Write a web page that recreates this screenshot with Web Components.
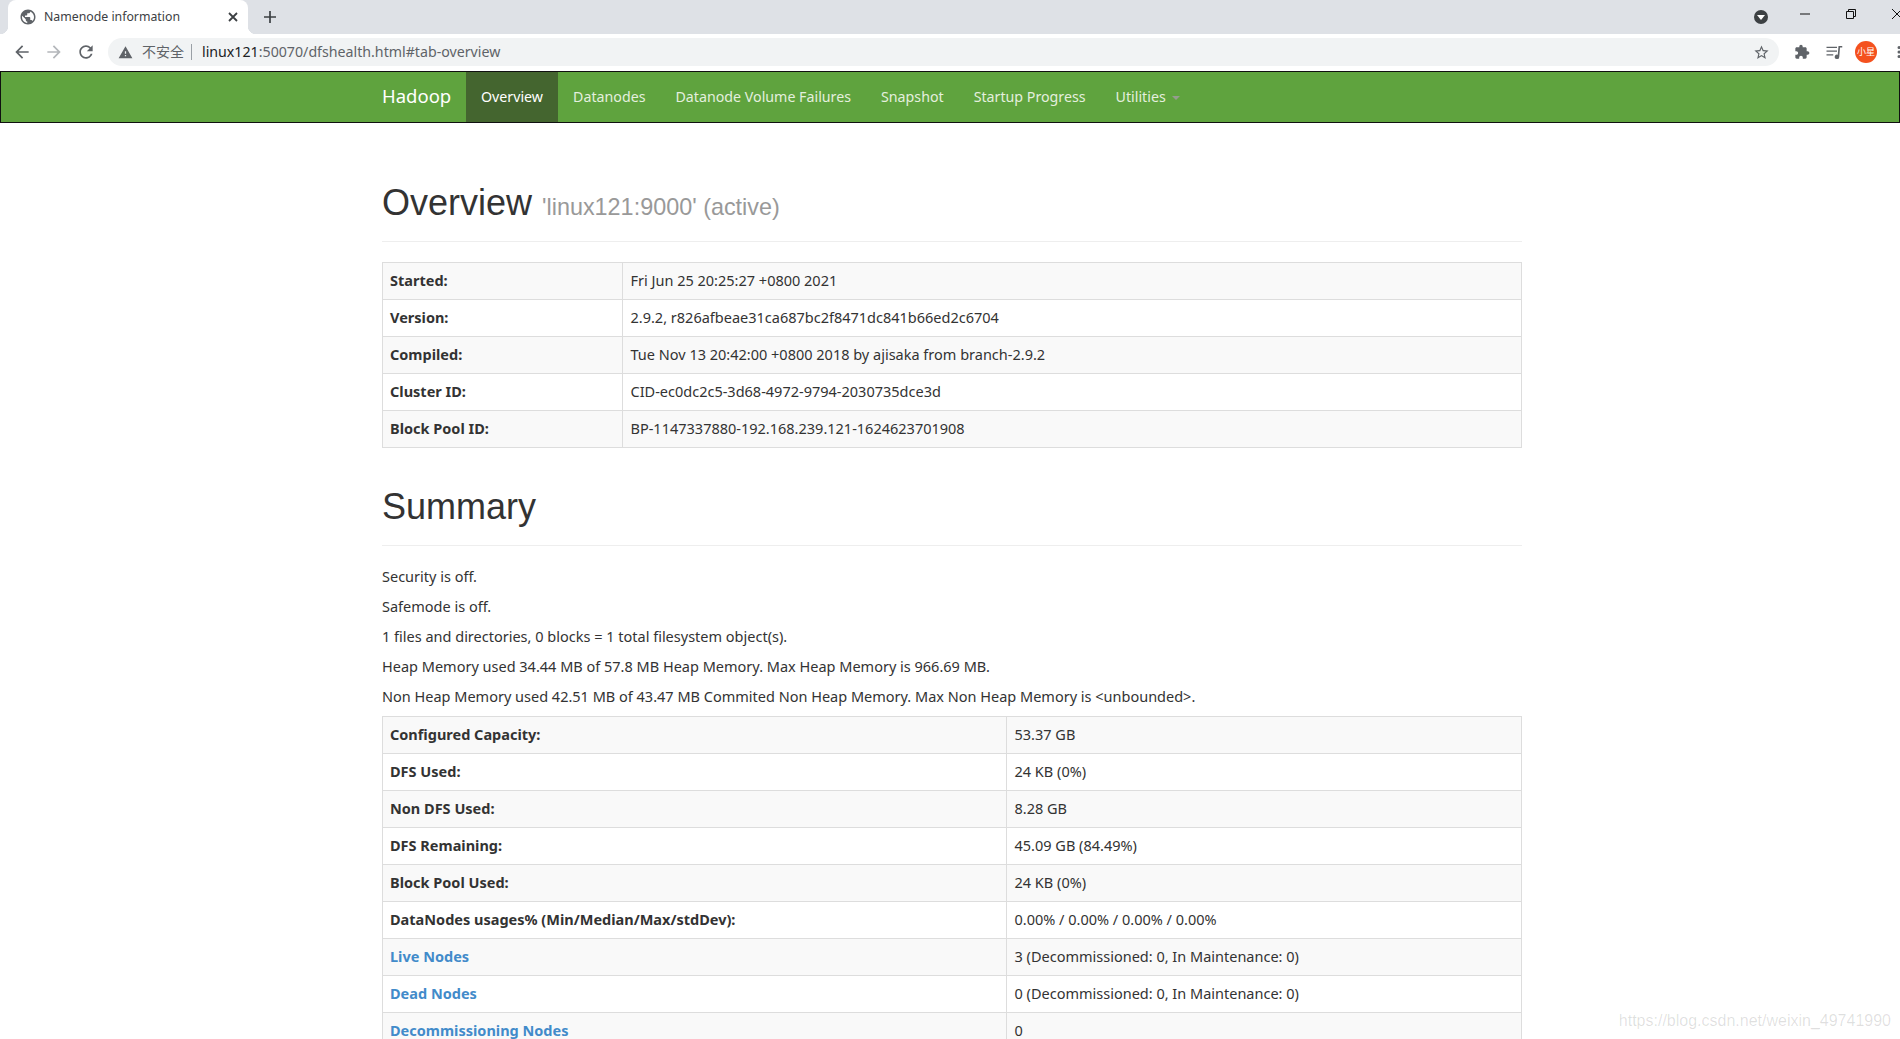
<!DOCTYPE html>
<html lang="en">
<head>
<meta charset="utf-8">
<title>Namenode information</title>
<style>
  html, body { margin: 0; height: 100%; overflow: hidden; background: #fff; }
  body { font: 14.5px/20px "Noto Sans", "Noto Sans CJK SC", sans-serif; color: #333; }
</style>
</head>
<body>
  <browser-frame tab-title="Namenode information" url="linux121:50070/dfshealth.html#tab-overview"></browser-frame>
  <hadoop-navbar brand="Hadoop">
    <nav-item active>Overview</nav-item>
    <nav-item>Datanodes</nav-item>
    <nav-item>Datanode Volume Failures</nav-item>
    <nav-item>Snapshot</nav-item>
    <nav-item>Startup Progress</nav-item>
    <nav-item caret>Utilities</nav-item>
  </hadoop-navbar>
  <page-body>
    <page-header first>Overview <small slot="small">'linux121:9000' (active)</small></page-header>
    <info-table label-width="240">
      <info-row label="Started:">Fri Jun 25 20:25:27 +0800 2021</info-row>
      <info-row label="Version:">2.9.2, r826afbeae31ca687bc2f8471dc841b66ed2c6704</info-row>
      <info-row label="Compiled:">Tue Nov 13 20:42:00 +0800 2018 by ajisaka from branch-2.9.2</info-row>
      <info-row label="Cluster ID:">CID-ec0dc2c5-3d68-4972-9794-2030735dce3d</info-row>
      <info-row label="Block Pool ID:">BP-1147337880-192.168.239.121-1624623701908</info-row>
    </info-table>
    <page-header>Summary</page-header>
    <text-line>Security is off.</text-line>
    <text-line>Safemode is off.</text-line>
    <text-line>1 files and directories, 0 blocks = 1 total filesystem object(s).</text-line>
    <text-line>Heap Memory used 34.44 MB of 57.8 MB Heap Memory. Max Heap Memory is 966.69 MB.</text-line>
    <text-line>Non Heap Memory used 42.51 MB of 43.47 MB Commited Non Heap Memory. Max Non Heap Memory is &lt;unbounded&gt;.</text-line>
    <info-table label-width="624">
      <info-row label="Configured Capacity:">53.37 GB</info-row>
      <info-row label="DFS Used:">24 KB (0%)</info-row>
      <info-row label="Non DFS Used:">8.28 GB</info-row>
      <info-row label="DFS Remaining:">45.09 GB (84.49%)</info-row>
      <info-row label="Block Pool Used:">24 KB (0%)</info-row>
      <info-row label="DataNodes usages% (Min/Median/Max/stdDev):">0.00% / 0.00% / 0.00% / 0.00%</info-row>
      <info-row label="Live Nodes" link>3 (Decommissioned: 0, In Maintenance: 0)</info-row>
      <info-row label="Dead Nodes" link>0 (Decommissioned: 0, In Maintenance: 0)</info-row>
      <info-row label="Decommissioning Nodes" link>0</info-row>
    </info-table>
  </page-body>
  <water-mark>https://blog.csdn.net/weixin_49741990</water-mark>

<script>
// material style icon paths, all on a 24 unit box
const ICONS = {
  globe: "M12 2C6.48 2 2 6.48 2 12s4.48 10 10 10 10-4.48 10-10S17.52 2 12 2zm-1 17.93c-3.95-.49-7-3.85-7-7.93 0-.62.08-1.21.21-1.79L9 15v1c0 1.1.9 2 2 2v1.93zm6.9-2.54c-.26-.81-1-1.39-1.9-1.39h-1v-3c0-.55-.45-1-1-1H8v-2h2c.55 0 1-.45 1-1V7h2c1.1 0 2-.9 2-2v-.41c2.93 1.19 5 4.06 5 7.41 0 2.08-.8 3.97-2.1 5.39z",
  back: "M20 11H7.83l5.59-5.59L12 4l-8 8 8 8 1.41-1.41L7.83 13H20v-2z",
  forward: "M4 11h12.17l-5.59-5.59L12 4l8 8-8 8-1.41-1.41L16.17 13H4v-2z",
  reload: "M17.65 6.35C16.2 4.9 14.21 4 12 4c-4.42 0-7.99 3.58-7.99 8s3.57 8 7.99 8c3.73 0 6.84-2.55 7.73-6h-2.08c-.82 2.33-3.04 4-5.65 4-3.31 0-6-2.69-6-6s2.69-6 6-6c1.66 0 3.14.69 4.22 1.78L13 11h7V4l-2.35 2.35z",
  warning: "M1 21h22L12 2 1 21zm12-3h-2v-2h2v2zm0-4h-2v-4h2v4z",
  star: "M22 9.24l-7.19-.62L12 2 9.19 8.63 2 9.24l5.46 4.73L5.82 21 12 17.27 18.18 21l-1.63-7.03L22 9.24zM12 15.4l-3.76 2.27 1-4.28-3.32-2.88 4.38-.38L12 6.1l1.71 4.04 4.38.38-3.32 2.88 1 4.28L12 15.4z",
  puzzle: "M20.5 11H19V7c0-1.1-.9-2-2-2h-4V3.5C13 2.12 11.88 1 10.5 1S8 2.12 8 3.5V5H4c-1.1 0-1.99.9-1.99 2v3.8H3.5c1.49 0 2.7 1.21 2.7 2.7s-1.21 2.7-2.7 2.7H2V20c0 1.1.9 2 2 2h3.8v-1.5c0-1.49 1.21-2.7 2.7-2.7 1.49 0 2.7 1.21 2.7 2.7V22H17c1.1 0 2-.9 2-2v-4h1.5c1.38 0 2.5-1.12 2.5-2.5S21.88 11 20.5 11z",
  media: "M2 5h14v1.800H2zM2 10h14v1.800H2zM2 15h9v1.800H2zM18 4h5v2h-3l-1 12.500a3 3 0 1 1-2-2.900z",
  menu: "M12 8a2 2 0 1 0 0-4 2 2 0 0 0 0 4zm0 2a2 2 0 1 0 0 4 2 2 0 0 0 0-4zm0 6a2 2 0 1 0 0 4 2 2 0 0 0 0-4z",
};

function icon(name, size, fill) {
  return `<svg width="${size}" height="${size}" viewBox="0 0 24 24" fill="${fill}"><path d="${ICONS[name]}"/></svg>`;
}

class BrowserFrame extends HTMLElement {
  constructor() {
    super();
    this.attachShadow({ mode: "open" });
  }

  connectedCallback() {
    const title = this.getAttribute("tab-title");
    const url = this.getAttribute("url");
    const [host, ...rest] = url.split(":");
    this.shadowRoot.innerHTML = `
      <style>
        :host { display: block; width: 1920px; font-family: "Noto Sans", "Noto Sans CJK SC", sans-serif; }
        .strip { height: 34px; background: #dee1e6; display: flex; align-items: flex-end; padding-left: 8px; }
        .tab { position: relative; width: 240px; height: 34px; box-sizing: border-box; background: #fff; border-radius: 8px 8px 0 0;
               display: flex; align-items: center; padding: 0 9px 0 11px; gap: 7px; font-size: 12.3px; color: #3c4043; }
        /* outward curves at the foot of the active tab */
        .tab::before, .tab::after { content: ""; position: absolute; bottom: 0; width: 8px; height: 8px; }
        .tab::before { left: -8px; background: radial-gradient(circle at 0 0, transparent 8px, #fff 8.500px); }
        .tab::after { right: -8px; background: radial-gradient(circle at 100% 0, transparent 8px, #fff 8.500px); }
        .tab .name { flex: 1; }
        .plus { margin: 0 0 0 15px; height: 34px; display: flex; align-items: center; }
        .spacer { flex: 1; }
        .win { height: 34px; display: flex; align-items: center; }
        .drop { width: 14px; height: 14px; background: #3c4043; border-radius: 50%; display: flex; align-items: center; justify-content: center; margin-right: 14px; }
        .drop i { border: 4px solid transparent; border-top: 5px solid #fff; border-bottom: 0; }
        .win svg { display: block; }
        .winbtn { width: 46px; display: flex; justify-content: center; margin-top: -6px; }
        .bar { height: 37px; box-sizing: border-box; background: #fff; display: flex; align-items: center; padding: 0 0 1px 12px; }
        .nav { display: flex; gap: 12px; margin-right: 12px; }
        .nav svg { display: block; }
        .omni { flex: none; width: 1671px; height: 28px; box-sizing: border-box; background: #f1f3f4; border-radius: 14px; display: flex; align-items: center; padding: 0 9px 0 10px; font-size: 14.2px; color: #5f6368; }
        .insecure { font-size: 14px; margin: 0 7px 0 9px; color: #5f6368; }
        .sep { width: 1px; height: 16px; background: #9aa0a6; margin-right: 10px; }
        .host { color: #202124; }
        .url { flex: 1; white-space: nowrap; }
        .tools { display: flex; align-items: center; margin-left: 15px; }
        .tools svg { display: block; }
        .tools .media { margin-left: 15px; }
        .avatar { width: 22px; height: 22px; margin: 0 13px 0 12px; border-radius: 50%; background: #f4511e; color: #fff; font-size: 9px; line-height: 22px; text-align: center; }
      </style>
      <div class="strip">
        <div class="tab">
          ${icon("globe", 18, "#5f6368")}
          <span class="name">${title}</span>
          <svg width="12" height="12" viewBox="0 0 12 12" stroke="#3c4043" stroke-width="1.8" fill="none"><path d="M2 2l8 8M10 2l-8 8"/></svg>
        </div>
        <div class="plus"><svg width="14" height="14" viewBox="0 0 14 14" stroke="#3c4043" stroke-width="1.7" fill="none"><path d="M7 1v12M1 7h12"/></svg></div>
        <div class="spacer"></div>
        <div class="win">
          <div class="drop"><i></i></div>
          <div class="winbtn"><svg width="10" height="10" viewBox="0 0 10 10" stroke="#111" fill="none"><path d="M0 5h10"/></svg></div>
          <div class="winbtn"><svg width="10" height="10" viewBox="0 0 10 10" stroke="#111" fill="none"><path d="M.5 2.500h7v7h-7zM2.500 2.500v-2h7v7h-2"/></svg></div>
          <div class="winbtn"><svg width="10" height="10" viewBox="0 0 10 10" stroke="#111" fill="none"><path d="M0 0l10 10M10 0l-10 10"/></svg></div>
        </div>
      </div>
      <div class="bar">
        <div class="nav">
          ${icon("back", 20, "#5f6368")}
          ${icon("forward", 20, "#b4b7bb")}
          ${icon("reload", 20, "#5f6368")}
        </div>
        <div class="omni">
          ${icon("warning", 15, "#5f6368")}
          <span class="insecure">不安全</span>
          <span class="sep"></span>
          <span class="url"><span class="host">${host}</span>:${rest.join(":")}</span>
          ${icon("star", 17, "#5f6368")}
        </div>
        <div class="tools">
          ${icon("puzzle", 16, "#5f6368")}
          <span class="media">${icon("media", 18, "#5f6368")}</span>
          <div class="avatar">小星</div>
          ${icon("menu", 18, "#5f6368")}
        </div>
      </div>
    `;
  }
}

class HadoopNavbar extends HTMLElement {
  constructor() {
    super();
    this.attachShadow({ mode: "open" });
    this.shadowRoot.innerHTML = `
      <style>
        :host { display: flex; height: 52px; box-sizing: border-box; background: #5fa33e;
                border: 1px solid #101010; padding-left: 381px; font-family: "Noto Sans", sans-serif; }
        .brand { color: #fff; font-size: 18.5px; line-height: 48px; width: 84px; }
        ::slotted(nav-item) { flex: none; }
      </style>
      <div class="brand"></div>
      <slot></slot>
    `;
    this.shadowRoot.querySelector(".brand").textContent = this.getAttribute("brand");
  }
}

class NavItem extends HTMLElement {
  constructor() {
    super();
    this.attachShadow({ mode: "open" });
    this.shadowRoot.innerHTML = `
      <style>
        :host { display: flex; align-items: center; padding: 0 15px 1px; font-size: 14.23px; color: #e4efde; }
        :host([active]) { background: #44652f; color: #fff; }
        .caret { display: none; margin: 2px 0 0 6px; border: 4px solid transparent; border-top: 4px solid #959c8f; border-bottom: 0; }
        :host([caret]) .caret { display: block; }
      </style>
      <slot></slot><i class="caret"></i>
    `;
  }
}

class PageBody extends HTMLElement {
  constructor() {
    super();
    this.attachShadow({ mode: "open" });
    this.shadowRoot.innerHTML = `
      <style>
        :host { display: block; width: 1140px; margin-left: 382px; padding-top: 60px; }
      </style>
      <slot></slot>
    `;
  }
}

class PageHeader extends HTMLElement {
  constructor() {
    super();
    this.attachShadow({ mode: "open" });
    this.shadowRoot.innerHTML = `
      <style>
        :host { display: block; margin: 39px 0 20px; padding-bottom: 18px; border-bottom: 1px solid #eee;
                font: 36px/40px "Liberation Sans", Arial, sans-serif; color: #333; }
        :host([first]) { margin-top: 0; }
        ::slotted(small) { font-size: 23.4px; line-height: 1; color: #999; }
      </style>
      <slot></slot> <slot name="small"></slot>
    `;
  }
}

class TextLine extends HTMLElement {
  constructor() {
    super();
    this.attachShadow({ mode: "open" });
    this.shadowRoot.innerHTML = `
      <style>
        :host { display: block; margin-bottom: 10px; }
      </style>
      <slot></slot>
    `;
  }
}

class InfoTable extends HTMLElement {
  constructor() {
    super();
    this.attachShadow({ mode: "open" });
    this.shadowRoot.innerHTML = `
      <style>
        :host { display: block; border: 1px solid #ddd; border-bottom: 0; box-sizing: border-box; margin-bottom: 20px; }
      </style>
      <slot></slot>
    `;
    this.style.setProperty("--label-width", this.getAttribute("label-width") + "px");
  }
}

class InfoRow extends HTMLElement {
  constructor() {
    super();
    this.attachShadow({ mode: "open" });
    this.shadowRoot.innerHTML = `
      <style>
        :host { display: grid; grid-template-columns: var(--label-width) 1fr; border-bottom: 1px solid #ddd; }
        :host(:nth-child(odd)) { background: #f9f9f9; }
        .label, .value { padding: 7px 7px 9px; }
        .label { font-weight: 700; border-right: 1px solid #ddd; box-sizing: border-box; }
        .value { padding-left: 7.5px; }
        a { color: #428bca; text-decoration: none; }
      </style>
      <div class="label"></div>
      <div class="value"><slot></slot></div>
    `;
  }

  connectedCallback() {
    const label = this.shadowRoot.querySelector(".label");
    if (this.hasAttribute("link")) {
      const a = document.createElement("a");
      a.href = "#";
      a.textContent = this.getAttribute("label");
      label.appendChild(a);
    } else {
      label.textContent = this.getAttribute("label");
    }
  }
}

class WaterMark extends HTMLElement {
  constructor() {
    super();
    this.attachShadow({ mode: "open" });
    this.shadowRoot.innerHTML = `
      <style>
        :host { position: absolute; right: 9px; bottom: 8px; font: 16px/20px "Liberation Sans", sans-serif; color: rgba(0,0,0,.13); }
      </style>
      <slot></slot>
    `;
  }
}

customElements.define("browser-frame", BrowserFrame);
customElements.define("hadoop-navbar", HadoopNavbar);
customElements.define("nav-item", NavItem);
customElements.define("page-body", PageBody);
customElements.define("page-header", PageHeader);
customElements.define("text-line", TextLine);
customElements.define("info-table", InfoTable);
customElements.define("info-row", InfoRow);
customElements.define("water-mark", WaterMark);
</script>
</body>
</html>
